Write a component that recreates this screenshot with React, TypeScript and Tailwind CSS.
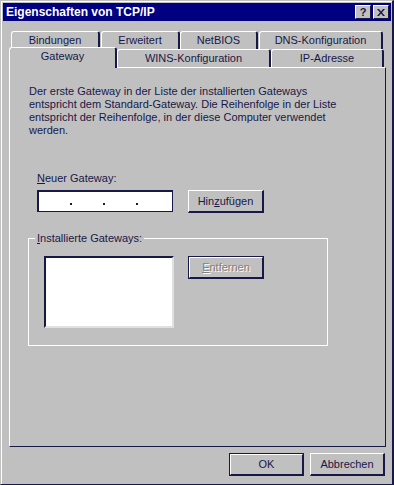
import React from "react";

const font = { fontFamily: '"Liberation Sans", Arial, sans-serif' };

function Tab({ label, w, selected }: { label: string; w: string; selected?: boolean }) {
  return (
    <div
      className={`${w} ${
        selected
          ? "relative z-10 -mt-[2px] h-[21px] -mb-[1px] pb-[3px]"
          : "h-[18px]"
      } flex items-center justify-center rounded-t-[3px] border-l border-t border-r-2 border-l-white border-t-white border-r-[#181848] bg-[#c0c0c0] text-[11px] text-[#181848]`}
    >
      {label}
    </div>
  );
}

function Button({ children, w, def }: { children: React.ReactNode; w: string; def?: boolean }) {
  if (def) {
    return (
      <div className={`${w} h-[23px] border border-[#181848]`}>
        <div className="flex h-full w-full items-center justify-center border-l border-t border-r border-b border-l-white border-t-white border-r-[#181848] border-b-[#181848] text-[11px]">
          {children}
        </div>
      </div>
    );
  }
  return (
    <div
      className={`${w} h-[23px] flex items-center justify-center border-l border-t border-r-2 border-b-2 border-l-white border-t-white border-r-[#181848] border-b-[#181848] text-[11px] text-[#181848]`}
    >
      {children}
    </div>
  );
}

export default function App() {
  return (
    <div
      className="w-[394px] h-[485px] bg-[#c0c0c0] border-l border-t border-[#c0c0c0] border-r-2 border-b border-r-[#181848] border-b-[#181848] text-[#181848]"
      style={font}
    >
      <div className="flex h-full flex-col border-l border-t border-white p-[1px]">
        {/* title bar */}
        <div className="flex h-[18px] items-center bg-[#000080] pl-[3px] pr-[2px]">
          <span className="text-[12px] font-bold text-white">Eigenschaften von TCP/IP</span>
          <div className="ml-auto flex gap-[2px]">
            <div className="flex h-[14px] w-[16px] items-center justify-center border-l border-t border-r border-b border-l-white border-t-white border-r-[#181848] border-b-[#181848] bg-[#c0c0c0] text-[11px] font-bold leading-none">
              ?
            </div>
            <div className="flex h-[14px] w-[16px] items-center justify-center border-l border-t border-r border-b border-l-white border-t-white border-r-[#181848] border-b-[#181848] bg-[#c0c0c0]">
              <svg width="8" height="7" viewBox="0 0 8 7">
                <path d="M0 0h2l2 2.5L6 0h2L5 3.5 8 7H6L4 4.5 2 7H0l3-3.5z" fill="#181848" />
              </svg>
            </div>
          </div>
        </div>

        {/* tabs row 1 */}
        <div className="mt-[10px] flex pl-[8px]">
          <Tab label="Bindungen" w="w-[89px]" />
          <div className="ml-[1px]">
            <Tab label="Erweitert" w="w-[79px]" />
          </div>
          <Tab label="NetBIOS" w="w-[78px]" />
          <div className="ml-[1px]">
            <Tab label="DNS-Konfiguration" w="w-[124px]" />
          </div>
        </div>
        {/* tabs row 2 */}
        <div className="flex pl-[6px]">
          <Tab label="Gateway" w="w-[108px]" selected />
          <Tab label="WINS-Konfiguration" w="w-[154px]" />
          <Tab label="IP-Adresse" w="w-[113px]" />
        </div>

        {/* panel */}
        <div className="ml-[6px] flex h-[380px] w-[377px] flex-col border-l border-t border-r border-b border-l-white border-t-white border-r-[#181848] border-b-[#181848] pl-[19px] pt-[17px]">
          <p className="text-[11px] leading-[13px]">
            Der erste Gateway in der Liste der installierten Gateways
            <br />
            entspricht dem Standard-Gateway. Die Reihenfolge in der Liste
            <br />
            entspricht der Reihenfolge, in der diese Computer verwendet
            <br />
            werden.
          </p>

          <div className="ml-[8px] mt-[35px] text-[11px] leading-[13px]">
            <span className="underline">N</span>euer Gateway:
          </div>
          <div className="ml-[8px] mt-[5px] flex gap-[15px]">
            <div className="relative h-[22px] w-[136px] border-l-2 border-t-2 border-r border-b border-[#181848] bg-white">
              <span className="absolute left-[31px] top-[11px] h-[2px] w-[2px] bg-[#181848]" />
              <span className="absolute left-[64px] top-[11px] h-[2px] w-[2px] bg-[#181848]" />
              <span className="absolute left-[97px] top-[11px] h-[2px] w-[2px] bg-[#181848]" />
            </div>
            <Button w="w-[76px]">
              <span>
                Hin<span className="underline">z</span>ufügen
              </span>
            </Button>
          </div>

          {/* group box */}
          <div className="relative -ml-[1px] mt-[25px] h-[108px] w-[300px] border border-white">
            <div className="absolute -top-[7px] left-[6px] bg-[#c0c0c0] px-[2px] text-[11px] leading-[13px]">
              <span className="underline">I</span>nstallierte Gateways:
            </div>
            <div className="ml-[15px] mt-[17px] flex gap-[14px]">
              <div className="h-[72px] w-[130px] border-l-2 border-t-2 border-r-2 border-b-2 border-l-[#181848] border-t-[#181848] border-r-[#e0e0e0] border-b-[#e0e0e0] bg-white" />
              <Button w="w-[76px]" def>
                <span className="text-[#808080] [text-shadow:1px_1px_0_#ffffff]">
                  <span className="underline">E</span>ntfernen
                </span>
              </Button>
            </div>
          </div>
        </div>

        {/* dialog buttons */}
        <div className="mt-[6px] flex justify-end gap-[6px] pr-[6px]">
          <Button w="w-[75px]" def>
            OK
          </Button>
          <Button w="w-[75px]">Abbrechen</Button>
        </div>
      </div>
    </div>
  );
}
